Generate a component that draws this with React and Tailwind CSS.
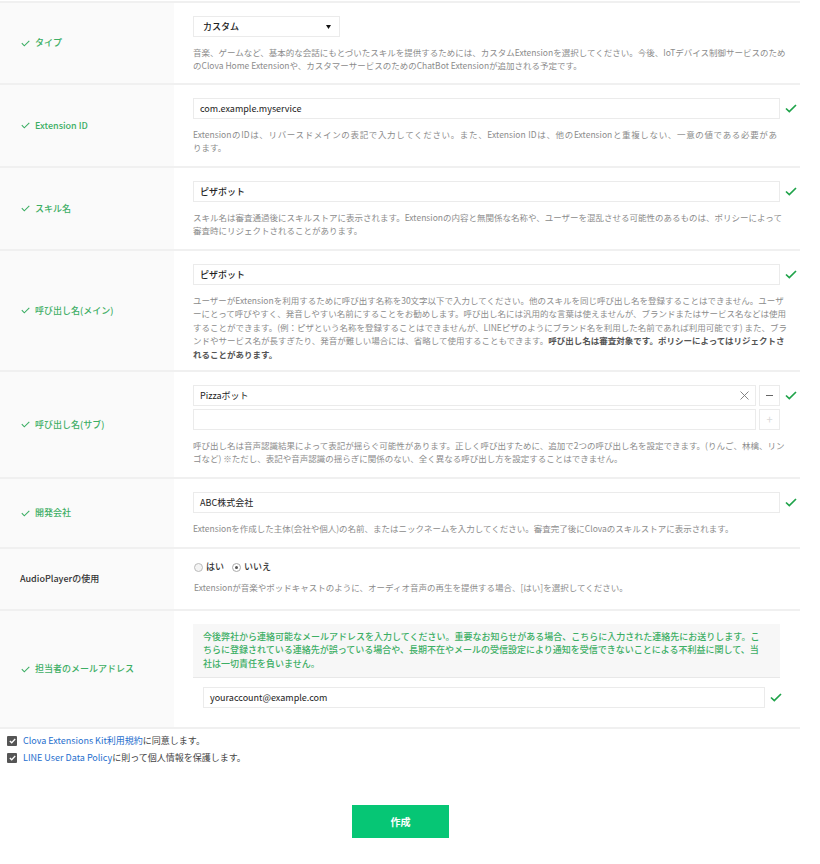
import React from "react";

const Check = () => (
  <svg width="9" height="7" viewBox="0 0 9 7" className="shrink-0">
    <path d="M0.8 3.2 L3.3 5.8 L8.3 0.8" fill="none" stroke="#3cae64" strokeWidth="1.1" />
  </svg>
);

const OkCheck = () => (
  <svg width="12" height="9" viewBox="0 0 12 9" className="shrink-0">
    <path d="M1 4.5 L4.3 7.6 L11 1" fill="none" stroke="#1fa34a" strokeWidth="1.7" />
  </svg>
);

const Label = ({ children, check = true }) => (
  <div className="w-[174px] shrink-0 bg-[#fafafa] flex items-center gap-[5px] pl-[21px] text-[9px] font-medium text-[#3cae64]">
    {check && <Check />}
    <span>{children}</span>
  </div>
);

const Desc = ({ lines }) => (
  <div className="mt-[9px] text-[8.5px] leading-[13.4px] text-[#8c8c8c]">
    {lines.map((l, i) =>
      i < lines.length - 1 ? (
        <div key={i} className="w-[584px] whitespace-nowrap text-justify [text-align-last:justify]">{l}</div>
      ) : (
        <div key={i} className="whitespace-nowrap">{l}</div>
      )
    )}
  </div>
);

const Input = ({ value }) => (
  <div className="flex items-center">
    <div className="w-[587px] h-[21px] border border-[#ebebeb] bg-white px-[6px] flex items-center text-[9px] text-[#222]">
      {value}
    </div>
    <div className="ml-[5px]"><OkCheck /></div>
  </div>
);

export default function App() {
  return (
    <div className="w-[820px] min-h-[864px] bg-white font-['Noto_Sans_CJK_JP','Noto_Sans',sans-serif]">
      <div className="w-[800px] mt-[1px] border-t-2 border-[#f0f0f0]">
        {/* タイプ */}
        <div className="flex h-[82px] border-b-2 border-[#f0f0f0]">
          <Label>タイプ</Label>
          <div className="flex-1 pl-[19px] pt-[13px]">
            <div className="w-[147px] h-[21px] border border-[#ebebeb] flex items-center justify-between pl-[9px] pr-[8px] text-[9px] font-medium text-[#222]">
              <span>カスタム</span>
              <svg width="5" height="4" viewBox="0 0 5 4">
                <path d="M0 0 L5 0 L2.5 4 Z" fill="#111" />
              </svg>
            </div>
            <Desc
              lines={[
                "音楽、ゲームなど、基本的な会話にもとづいたスキルを提供するためには、カスタムExtensionを選択してください。今後、IoTデバイス制御サービスのため",
                "のClova Home Extensionや、カスタマーサービスのためのChatBot Extensionが追加される予定です。",
              ]}
            />
          </div>
        </div>

        {/* Extension ID */}
        <div className="flex h-[83px] border-b-2 border-[#f0f0f0]">
          <Label>Extension ID</Label>
          <div className="flex-1 pl-[19px] pt-[13px]">
            <Input value="com.example.myservice" />
            <Desc
              lines={[
                "ExtensionのIDは、リバースドメインの表記で入力してください。また、Extension IDは、他のExtensionと重複しない、一意の値である必要があ",
                "ります。",
              ]}
            />
          </div>
        </div>

        {/* スキル名 */}
        <div className="flex h-[83px] border-b-2 border-[#f0f0f0]">
          <Label>スキル名</Label>
          <div className="flex-1 pl-[19px] pt-[13px]">
            <Input value={<span className="font-medium">ピザボット</span>} />
            <Desc
              lines={[
                "スキル名は審査通過後にスキルストアに表示されます。Extensionの内容と無関係な名称や、ユーザーを混乱させる可能性のあるものは、ポリシーによって",
                "審査時にリジェクトされることがあります。",
              ]}
            />
          </div>
        </div>

        {/* 呼び出し名(メイン) */}
        <div className="flex h-[121px] border-b-2 border-[#f0f0f0]">
          <Label>呼び出し名(メイン)</Label>
          <div className="flex-1 pl-[19px] pt-[13px]">
            <Input value={<span className="font-medium">ピザボット</span>} />
            <Desc
              lines={[
                "ユーザーがExtensionを利用するために呼び出す名称を30文字以下で入力してください。他のスキルを同じ呼び出し名を登録することはできません。ユーザ",
                "ーにとって呼びやすく、発音しやすい名前にすることをお勧めします。呼び出し名には汎用的な言葉は使えませんが、ブランドまたはサービス名などは使用",
                "することができます。(例：ピザという名称を登録することはできませんが、LINEピザのようにブランド名を利用した名前であれば利用可能です) また、ブラ",
                <>
                  ンドやサービス名が長すぎたり、発音が難しい場合には、省略して使用することもできます。
                  <span className="font-bold text-[#555]">呼び出し名は審査対象です。ポリシーによってはリジェクトさ</span>
                </>,
                <span className="font-bold text-[#555]">れることがあります。</span>,
              ]}
            />
          </div>
        </div>

        {/* 呼び出し名(サブ) */}
        <div className="flex h-[107px] border-b-2 border-[#f0f0f0]">
          <Label>呼び出し名(サブ)</Label>
          <div className="flex-1 pl-[19px] pt-[13px]">
            <div className="flex items-center">
              <div className="w-[563px] h-[21px] border border-[#ebebeb] px-[6px] flex items-center justify-between text-[9px] text-[#222]">
                <span>Pizzaボット</span>
                <svg width="9" height="9" viewBox="0 0 9 9">
                  <path d="M0.5 0.5 L8.5 8.5 M8.5 0.5 L0.5 8.5" stroke="#777" strokeWidth="0.9" />
                </svg>
              </div>
              <div className="ml-[3px] w-[21px] h-[21px] border border-[#ebebeb] flex items-center justify-center">
                <div className="w-[7px] h-[1.5px] bg-[#666]" />
              </div>
              <div className="ml-[5px]"><OkCheck /></div>
            </div>
            <div className="flex items-center mt-[3px]">
              <div className="w-[563px] h-[21px] border border-[#ebebeb]" />
              <div className="ml-[3px] w-[21px] h-[21px] border border-[#ebebeb] flex items-center justify-center text-[11px] leading-none text-[#d8d8d8]">
                +
              </div>
            </div>
            <Desc
              lines={[
                "呼び出し名は音声認識結果によって表記が揺らぐ可能性があります。正しく呼び出すために、追加で2つの呼び出し名を設定できます。(りんご、林檎、リン",
                "ゴなど) ※ただし、表記や音声認識の揺らぎに関係のない、全く異なる呼び出し方を設定することはできません。",
              ]}
            />
          </div>
        </div>

        {/* 開発会社 */}
        <div className="flex h-[70px] border-b-2 border-[#f0f0f0]">
          <Label>開発会社</Label>
          <div className="flex-1 pl-[19px] pt-[13px]">
            <Input value="ABC株式会社" />
            <Desc
              lines={[
                "Extensionを作成した主体(会社や個人)の名前、またはニックネームを入力してください。審査完了後にClovaのスキルストアに表示されます。",
              ]}
            />
          </div>
        </div>

        {/* AudioPlayer */}
        <div className="flex h-[62px] border-b-2 border-[#f0f0f0]">
          <div className="w-[174px] shrink-0 bg-[#fafafa] flex items-center pl-[20px] text-[9px] font-medium text-[#333]">
            AudioPlayerの使用
          </div>
          <div className="flex-1 pl-[20px] pt-[13px]">
            <div className="flex items-center h-[10px] text-[9px] text-[#333] font-medium">
              <span className="w-[9px] h-[9px] rounded-full border border-[#bbb] bg-[#f4f4f4]" />
              <span className="ml-[3px]">はい</span>
              <span className="ml-[8px] w-[9px] h-[9px] rounded-full border border-[#aaa] bg-white flex items-center justify-center">
                <span className="w-[3px] h-[3px] rounded-full bg-[#555]" />
              </span>
              <span className="ml-[3px]">いいえ</span>
            </div>
            <Desc
              lines={[
                "Extensionが音楽やポッドキャストのように、オーディオ音声の再生を提供する場合、[はい]を選択してください。",
              ]}
            />
          </div>
        </div>

        {/* メールアドレス */}
        <div className="flex h-[118px] border-b-2 border-[#f0f0f0]">
          <Label>担当者のメールアドレス</Label>
          <div className="flex-1 pl-[19px] pt-[13px]">
            <div className="w-[587px] h-[54px] bg-[#f7f7f7] border-b border-[#e8e8e8] pl-[10px] pt-[6px] text-[9px] leading-[13.4px] font-medium text-[#3cae64]">
              <div className="whitespace-nowrap">今後弊社から連絡可能なメールアドレスを入力してください。重要なお知らせがある場合、こちらに入力された連絡先にお送りします。こ</div>
              <div className="whitespace-nowrap">ちらに登録されている連絡先が誤っている場合や、長期不在やメールの受信設定により通知を受信できないことによる不利益に関して、当</div>
              <div className="whitespace-nowrap">社は一切責任を負いません。</div>
            </div>
            <div className="flex items-center mt-[9px] ml-[10px]">
              <div className="w-[562px] h-[21px] border border-[#ebebeb] px-[6px] flex items-center text-[9px] text-[#222]">
                youraccount@example.com
              </div>
              <div className="ml-[5px]"><OkCheck /></div>
            </div>
          </div>
        </div>
      </div>

      {/* checkboxes */}
      <div className="pl-[7px] pt-[3px] text-[9px] leading-[17px] text-[#444]">
        <div className="flex items-center gap-[6px]">
          <span className="w-[10px] h-[10px] bg-[#555] rounded-[1px] flex items-center justify-center">
            <svg width="7" height="6" viewBox="0 0 7 6">
              <path d="M0.8 3 L2.7 4.8 L6.2 1" fill="none" stroke="#fff" strokeWidth="1.3" />
            </svg>
          </span>
          <span>
            <span className="text-[#1f6fce]">Clova Extensions Kit利用規約</span>に同意します。
          </span>
        </div>
        <div className="flex items-center gap-[6px]">
          <span className="w-[10px] h-[10px] bg-[#555] rounded-[1px] flex items-center justify-center">
            <svg width="7" height="6" viewBox="0 0 7 6">
              <path d="M0.8 3 L2.7 4.8 L6.2 1" fill="none" stroke="#fff" strokeWidth="1.3" />
            </svg>
          </span>
          <span>
            <span className="text-[#1f6fce]">LINE User Data Policy</span>に則って個人情報を保護します。
          </span>
        </div>
      </div>

      <div className="mt-[39px] ml-[352px] w-[97px] h-[33px] bg-[#06c675] flex items-center justify-center text-[10px] font-bold text-white">
        作成
      </div>
    </div>
  );
}
